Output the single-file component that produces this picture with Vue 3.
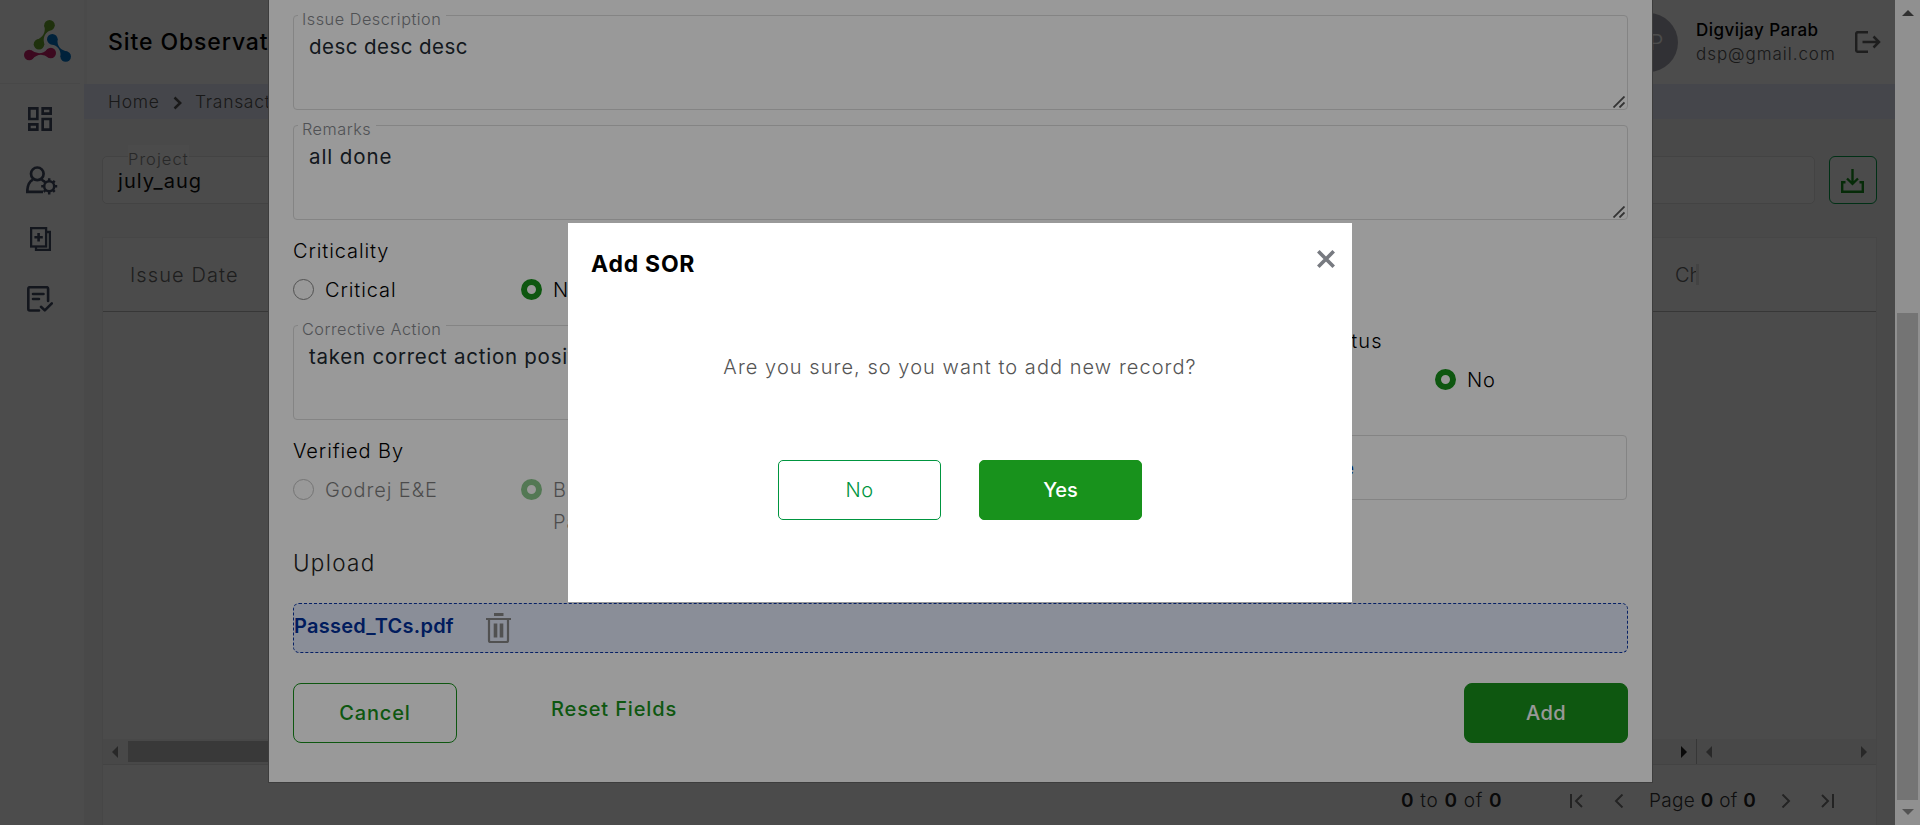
<script setup>
const table = { first: 'Issue Date', last: 'Ch' }
</script>

<template>
  <div class="page">
    <div class="shell">
      <aside class="sidebar">
        <div class="brand">
          <svg width="56" height="50" viewBox="20 16 56 50">
            <g fill="#6aa52e">
              <circle cx="49.5" cy="25.2" r="5.3" /><circle cx="39" cy="44.3" r="5.3" />
              <path d="M52.3 29.6Q41.6 33.3 44.2 44.3L36.2 39.9Q46.8 36.1 44.3 25.2Z" />
            </g>
            <g fill="#0072c6">
              <circle cx="52.3" cy="39.3" r="5.3" /><circle cx="65.7" cy="56.5" r="5.3" />
              <path d="M57.4 38.5Q56.6 49.7 67.8 51.7L60.6 57.3Q61.4 46.1 50.2 44.1Z" />
            </g>
            <g fill="#c81e68">
              <circle cx="29.2" cy="55" r="5.2" /><circle cx="50.8" cy="53" r="5.2" />
              <path d="M32.1 59.3Q39.7 51 48.7 57.7L47.9 48.7Q40.3 57 31.3 50.3Z" />
            </g>
          </svg>
        </div>
        <nav class="nav">
          <span class="slot">
            <svg width="24" height="24" viewBox="3 3 18 18" fill="#424b63">
              <path d="M19 5v2h-4V5h4M9 5v6H5V5h4m10 8v6h-4v-6h4M9 17v2H5v-2h4M21 3h-8v6h8V3zM11 3H3v10h8V3zm10 8h-8v10h8V11zm-10 4H3v6h8v-6z" />
            </svg>
          </span>
          <span class="slot wide">
            <svg width="32" height="29" viewBox="0 0 32 29" fill="none" stroke="#424b63" stroke-width="2.7">
              <circle cx="11.300" cy="7.800" r="6.300" />
              <path d="M7 13.600C3.200 15.500 1.300 19 1.300 25.800H17M15.500 13.600q1.500.7 2.700 2" />
              <circle cx="23.200" cy="20.300" r="5" stroke-width="2.500" />
              <path d="M23.200 15V12.200M23.200 25.600v2.800M17.900 20.300h-2.700M28.500 20.300h2.700M19.400 16.500l-1.700-1.700M27 24.100l1.700 1.700M27 16.500l1.700-1.700M19.400 24.100l-1.700 1.700" stroke-width="2.500" />
            </svg>
          </span>
          <span class="slot">
            <svg width="21" height="24" viewBox="0 0 21 24" fill="none" stroke="#424b63" stroke-width="2.300">
              <rect x="1.100" y="1.100" width="15" height="18.400" />
              <path d="M8.600 6v8.400M4.400 10.200h8.400" stroke-width="2.600" />
              <path d="M16 5h3.900v17.800H6v-3.500" />
            </svg>
          </span>
          <span class="slot">
            <svg width="26" height="26" viewBox="0 0 26 26" fill="none" stroke="#424b63" stroke-width="2.600" stroke-linecap="round" stroke-linejoin="round">
              <path d="M12 24.500H2.800q-1.500 0-1.500-1.500V2.700q0-1.500 1.500-1.500h16.800q1.500 0 1.500 1.500V15" />
              <path d="M6 8h10.500M6 13h6M14 20.800l3.800 3.600 7-7" />
            </svg>
          </span>
        </nav>
      </aside>

      <main class="main">
        <header class="topbar">
          <h1 class="title">Site Observations</h1>
          <div class="user">
            <span class="avatar">DP</span>
            <span class="who">
              <b class="name">Digvijay Parab</b>
              <span class="mail">dsp@gmail.com</span>
            </span>
            <svg class="logout" width="26" height="22" viewBox="0 0 26 22" fill="none" stroke="#666" stroke-width="2.500">
              <path d="M13 1.200H3q-1.800 0-1.800 1.800v16q0 1.800 1.800 1.800h10M7.500 11h16M18.500 5.500L24 11l-5.500 5.500" />
            </svg>
          </div>
        </header>
        <div class="crumbs">
          <span class="home">Home</span>
          <svg width="9" height="14" viewBox="0 0 9 14" fill="none" stroke="#555" stroke-width="2.500"><path d="M1.500 1.500L7.200 7 1.500 12.500" /></svg>
          <span class="here">Transactions</span>
        </div>

        <div class="filters">
          <div class="project"><span class="float">Project</span><span class="value">july_aug</span></div>
          <button class="download">
            <svg width="23" height="24" viewBox="0 0 23 24" fill="none" stroke="#16901c" stroke-width="2.400">
              <path d="M11.500 0v14.500M6 9.500l5.500 5.300L17 9.500M4.500 13.200H1.200v9.600h20.600v-9.600h-3.300" />
            </svg>
          </button>
        </div>

        <div class="grid">
          <div class="grid-head">
            <span class="col-first">{{ table.first }}</span>
            <span class="col-last">{{ table.last }}</span>
            <i class="col-sep"></i>
          </div>
          <div class="grid-body"></div>
          <div class="hscroll">
            <div class="track first-track">
              <svg width="6" height="12" viewBox="0 0 6 12"><path d="M6 0v12L0 6z" fill="#888" /></svg>
              <i class="thumb"></i>
              <svg width="6" height="12" viewBox="0 0 6 12"><path d="M0 0v12l6-6z" fill="#222" /></svg>
            </div>
            <div class="track last-track">
              <svg width="6" height="12" viewBox="0 0 6 12"><path d="M6 0v12L0 6z" fill="#888" /></svg>
              <svg width="6" height="12" viewBox="0 0 6 12"><path d="M0 0v12l6-6z" fill="#888" /></svg>
            </div>
          </div>
          <div class="pager">
            <span class="range"><b>0</b> to <b>0</b> of <b>0</b></span>
            <svg class="p1" width="13" height="14" viewBox="0 0 13 14"><path d="M1 0v14M12 1L6 7l6 6" /></svg>
            <svg class="p2" width="10" height="14" viewBox="0 0 10 14"><path d="M8.500 0.500L2 7l6.500 6.500" /></svg>
            <span class="pages">Page <b>0</b> of <b>0</b></span>
            <svg class="p3" width="10" height="14" viewBox="0 0 10 14"><path d="M1.500 0.500L8 7l-6.500 6.500" /></svg>
            <svg class="p4" width="13" height="14" viewBox="0 0 13 14"><path d="M12 0v14M1 1l6 6-6 6" /></svg>
          </div>
        </div>
      </main>
    </div>

    <div class="backdrop"></div>

    <section class="form">
      <div class="area"><span class="area-label">Issue Description</span><p class="t1">desc desc desc</p>
        <svg class="grip" width="12" height="12" viewBox="0 0 12 12"><path d="M0.500 11.500l11-11M6.500 11.500l5-5" /></svg>
      </div>
      <div class="area"><span class="area-label">Remarks</span><p class="t2">all done</p>
        <svg class="grip" width="12" height="12" viewBox="0 0 12 12"><path d="M0.500 11.500l11-11M6.500 11.500l5-5" /></svg>
      </div>

      <div class="group">
        <div class="label">Criticality</div>
        <div class="radios">
          <label class="radio"><i class="dot"></i><span>Critical</span></label>
          <label class="radio"><i class="dot on"></i><span>Non Critical</span></label>
        </div>
      </div>

      <div class="cols row-action">
        <div class="area"><span class="area-label">Corrective Action</span><p class="t3">taken correct action positively</p></div>
        <div class="group status">
          <div class="label">Compliance Status</div>
          <div class="radios">
            <label class="radio"><i class="dot"></i><span>Yes</span></label>
            <label class="radio"><i class="dot on"></i><span>No</span></label>
          </div>
        </div>
      </div>

      <div class="cols row-verify">
        <div class="group">
          <div class="label">Verified By</div>
          <div class="radios disabled">
            <label class="radio"><i class="dot"></i><span>Godrej E&amp;E</span></label>
            <label class="radio"><i class="dot on"></i><span class="two">Business<br>Partner</span></label>
          </div>
        </div>
        <div class="filebox"><span>Upload File</span></div>
      </div>

      <h2 class="upload">Upload</h2>
      <div class="file">
        <span class="filename">Passed_TCs.pdf</span>
        <svg width="25" height="31" viewBox="0 0 25 31" fill="none" stroke="#888">
          <path d="M8 1.500h9.500" stroke-width="3" />
          <path d="M0 6h25" stroke-width="2" />
          <path d="M3 6v21.500q0 1.500 1.500 1.500h16q1.500 0 1.500-1.500V6" stroke-width="2.200" />
          <path d="M9.500 10.500v14M15.500 10.500v14" stroke-width="3.600" />
        </svg>
      </div>
      <div class="actions">
        <button class="btn cancel">Cancel</button>
        <span class="reset">Reset Fields</span>
        <button class="btn add">Add</button>
      </div>
    </section>

    <div class="vscroll">
      <svg width="12" height="6" viewBox="0 0 12 6"><path d="M0 6h12L6 0z" fill="#505050" /></svg>
      <i class="vthumb"></i>
      <svg width="12" height="6" viewBox="0 0 12 6"><path d="M0 0h12L6 6z" fill="#8b8b8b" /></svg>
    </div>

    <div class="backdrop second"></div>

    <section class="dialog">
      <header class="dialog-head">
        <h3>Add SOR</h3>
        <svg width="18" height="18" viewBox="0 0 18 18" fill="none" stroke="#777a80" stroke-width="3.600"><path d="M1.300 1.300l15.400 15.400M16.700 1.300L1.300 16.700" /></svg>
      </header>
      <p class="question">Are you sure, so you want to add new record?</p>
      <div class="choices">
        <button class="btn no">No</button>
        <button class="btn yes">Yes</button>
      </div>
    </section>
  </div>
</template>

<style>
body { margin: 0; overflow: hidden; }
</style>

<style scoped>
* { box-sizing: border-box; }
.page {
  position: relative; width: 1920px; height: 825px; overflow: hidden; background: #fff;
  font-family: Inter, "Noto Sans", sans-serif; font-size: 20px; font-weight: 350; letter-spacing: 0.9px; color: #000;
}
h1, h2, h3, p { margin: 0; font-weight: 400; }
svg { display: block; flex: none; }
button { font: inherit; letter-spacing: inherit; padding: 0; }

.shell { display: flex; height: 825px; width: 1895px; }
.sidebar { flex: none; width: 84px; background: #fff; padding-right: 4px; }
.brand { height: 84px; border-bottom: 1px solid #f0f0f0; padding: 16px 0 0 20px; }
.nav { padding-top: 5px; }
.slot { display: flex; height: 60px; align-items: center; justify-content: center; }
.slot.wide { padding: 2px 0 0 3px; }

.main { flex: 1; display: flex; flex-direction: column; background: #f5f5f5; }
.topbar { height: 84px; flex: none; display: flex; align-items: center; justify-content: space-between; background: #fff; border-left: 3px solid #f8f8f8; padding: 0 14px 0 21px; }
.title { font-size: 23px; font-weight: 450; letter-spacing: 0.9px; }
.user { display: flex; align-items: center; }
.avatar { width: 59px; height: 59px; border-radius: 50%; background: #a7a7b2; color: #fff; display: flex; align-items: center; justify-content: center; font-size: 22px; margin-right: 18px; }
.who { display: flex; flex-direction: column; width: 159px; line-height: 24px; font-size: 17px; }
.name { font-weight: 500; letter-spacing: 0.45px; }
.mail { color: #555; letter-spacing: 0.95px; }
.crumbs { height: 35px; flex: none; display: flex; align-items: center; background: #e9ecfb; padding-left: 24px; font-size: 17.500px; color: #555; letter-spacing: 0.7px; }
.crumbs svg { margin-top: 3px; }
.home { width: 65px; }
.here { margin-left: 13px; }
.crumbs .home, .crumbs .here { margin-top: -1px; }

.filters { flex: none; display: flex; justify-content: space-between; padding: 37px 18px 0 18px; }
.project { position: relative; width: 1713px; height: 48px; border: 1px solid #e0e0e0; border-radius: 5px; background: #fdfdfd; padding-left: 15px; display: flex; align-items: center; }
.float { position: absolute; left: 25px; top: -12px; height: 22px; line-height: 28px; font-size: 16.500px; color: #888; background: #fafafa; letter-spacing: 1.050px; }
.value { padding-top: 1px; color: #111; font-weight: 400; letter-spacing: 1.050px; }
.download { width: 48px; height: 48px; border: 1px solid #00a047; border-radius: 6px; background: #fdfdfd; display: flex; align-items: center; justify-content: center; padding: 1px 2px 0 0; }

.grid { margin: 33px 18px 0 18px; flex: 1; display: flex; flex-direction: column; border: 1px solid #ececec; border-bottom: 0; background: #fdfdfd; }
.grid-head { flex: none; height: 74px; display: flex; align-items: center; border-bottom: 1px solid #bbb; padding: 0 0 0 27px; color: #666; }
.col-first { width: 1545px; letter-spacing: 1.100px; }
.col-last { width: 21px; overflow: hidden; letter-spacing: 0; }
.col-sep { width: 3px; height: 21px; background: #e2e2e2; }
.grid-body { flex: none; height: 427px; }
.hscroll { flex: none; height: 26px; display: flex; border-bottom: 1px solid #e2e2e2; background: #f1f1f1; }
.track { display: flex; align-items: center; justify-content: space-between; }
.first-track { width: 1594px; padding: 0 9px; border-right: 1px solid #bbb; }
.thumb { width: 1200px; height: 21px; background: #c1c1c1; margin: 0 auto 0 10px; }
.last-track { flex: 1; padding: 0 9px 0 9px; }
.pager { flex: none; display: flex; align-items: center; height: 71px; padding-left: 1298px; font-size: 19px; color: #333; }
.pager b { font-weight: 600; color: #222; }
.pager svg { fill: none; stroke: #777; stroke-width: 2; }
.range { width: 169px; letter-spacing: 0.7px; white-space: nowrap; }
.p1 { margin-right: 31px; }
.pages { margin-left: 25px; width: 132px; letter-spacing: 0.300px; white-space: nowrap; }
.p4 { margin-left: 30px; }

.backdrop { position: absolute; inset: 0; background: rgba(0, 0, 0, 0.5); }
.backdrop.second { background: rgba(0, 0, 0, 0.4); }

.form { position: absolute; left: 268px; top: -1px; width: 1385px; height: 784px; background: #fff; border: 1px solid #666; padding: 15px 24px 0; }
.area { position: relative; height: 95px; border: 1px solid #dcdcdc; border-radius: 4px; margin-bottom: 15px; color: #222b33; }
.area p { padding: 17px 0 0 15px; line-height: 28px; font-size: 20.500px; font-weight: 400; }
.area .t1 { letter-spacing: 0.45px; }
.area .t2 { letter-spacing: 0.9px; }
.area .t3 { letter-spacing: 0.75px; }
.area-label { position: absolute; left: 4px; top: -8px; padding: 0 5px 0 4px; line-height: 22px; font-size: 16.300px; background: #fff; color: #85888d; letter-spacing: 0.5px; white-space: nowrap; }
.grip { position: absolute; right: 2px; bottom: 1px; fill: none; stroke: #555; stroke-width: 1.800; }
.group { padding-top: 1px; }
.label { height: 30px; line-height: 30px; margin-bottom: 13px; white-space: nowrap; }
.radios { display: flex; height: 21px; }
.radio { flex: none; display: flex; width: 228px; align-items: flex-start; line-height: 22px; white-space: nowrap; }
.status .radio { width: 246px; }
.status .label { letter-spacing: 1.150px; }
.dot { flex: none; width: 21px; height: 21px; border: 1px solid #888; border-radius: 50%; margin-right: 11px; }
.dot.on { border: 6px solid #18921c; }
.disabled { opacity: 0.5; }
.two { line-height: 32px; margin-top: -5px; }
.cols { display: grid; grid-template-columns: 878px 438px; column-gap: 18px; }
.row-action { margin-top: 25px; height: 110px; }
.row-verify { height: 118px; }
.filebox { height: 65px; border: 1px solid #dcdcdc; border-radius: 4px; color: #003aa0; display: flex; align-items: center; }
.filebox span { width: 165px; text-align: right; font-weight: 500; }
.upload { height: 20px; line-height: 20px; font-size: 22.500px; font-weight: 350; letter-spacing: 1.300px; margin-bottom: 30px; color: #222; }
.file { height: 50px; border: 1px dashed #0a36a8; border-radius: 6px; background: #e6edfd; display: flex; align-items: center; }
.filename { width: 192px; font-weight: 600; color: #00309c; padding: 0 0 4px 0; letter-spacing: 0.250px; }
.actions { display: flex; align-items: center; padding-top: 30px; }
.btn { display: flex; align-items: center; justify-content: center; width: 164px; height: 60px; border: 1px solid #18921c; border-radius: 8px; background: #fff; color: #18921c; }
.cancel, .reset, .add { font-weight: 500; letter-spacing: 0.85px; }
.reset { color: #18921c; margin-left: 94px; padding-bottom: 8px; }
.btn.add { margin-left: auto; background: #18921c; color: #fff; letter-spacing: 0.5px; }

.vscroll { position: absolute; top: 0; right: 0; width: 25px; height: 825px; background: #f1f1f1; display: flex; flex-direction: column; align-items: center; padding-top: 10px; }
.vthumb { width: 21px; height: 487px; background: #c1c1c1; margin: 297px 0 9px; }

.dialog { position: absolute; left: 568px; top: 223px; width: 784px; height: 379px; background: #fff; }
.dialog-head { display: flex; justify-content: space-between; align-items: flex-start; padding: 27px 17px 0 23px; }
.dialog-head h3 { font-size: 23px; line-height: 28px; font-weight: 650; letter-spacing: 0.75px; }
.question { margin-top: 74px; height: 30px; line-height: 30px; text-align: center; color: #555; font-weight: 350; letter-spacing: 1.050px; }
.choices { display: flex; justify-content: center; gap: 38px; margin-top: 78px; }
.choices .btn { width: 163px; border-radius: 5px; }
.choices .no { border-color: #00953f; color: #00953f; letter-spacing: 0.4px; }
.choices .yes { background: #18921c; color: #fff; font-weight: 500; letter-spacing: 0; }
</style>
